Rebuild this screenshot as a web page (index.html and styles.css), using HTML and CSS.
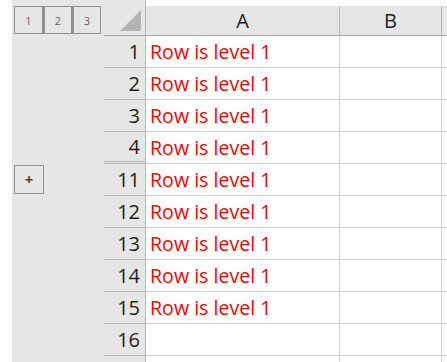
FILE: index.html
```html
<!DOCTYPE html>
<html lang="en">
<head>
  <meta charset="UTF-8">
  <title>Outline</title>
  <link rel="stylesheet" href="styles.css">
</head>
<body>
<div class="sheet">
  <div class="strip"></div>
  <div class="outline">
    <div class="levels">
      <button class="lvl">1</button>
      <button class="lvl">2</button>
      <button class="lvl">3</button>
    </div>
    <div class="expand-row">
      <button class="expand">+</button>
    </div>
  </div>
  <div class="grid">
    <div class="corner">
      <svg width="22" height="22" viewBox="0 0 22 22"><polygon points="21,0 21,21 0,21" fill="#b4b4b4"/></svg>
    </div>
    <div class="colhead">A</div>
    <div class="colhead">B</div>
    <div class="colhead rest"></div>

    <div class="rowhead">1</div><div class="cell">Row is level 1</div><div class="cell"></div><div class="cell rest"></div>
    <div class="rowhead">2</div><div class="cell">Row is level 1</div><div class="cell"></div><div class="cell rest"></div>
    <div class="rowhead">3</div><div class="cell">Row is level 1</div><div class="cell"></div><div class="cell rest"></div>
    <div class="rowhead hidden-after">4</div><div class="cell">Row is level 1</div><div class="cell"></div><div class="cell rest"></div>
    <div class="rowhead">11</div><div class="cell">Row is level 1</div><div class="cell"></div><div class="cell rest"></div>
    <div class="rowhead">12</div><div class="cell">Row is level 1</div><div class="cell"></div><div class="cell rest"></div>
    <div class="rowhead">13</div><div class="cell">Row is level 1</div><div class="cell"></div><div class="cell rest"></div>
    <div class="rowhead">14</div><div class="cell">Row is level 1</div><div class="cell"></div><div class="cell rest"></div>
    <div class="rowhead">15</div><div class="cell">Row is level 1</div><div class="cell"></div><div class="cell rest"></div>
    <div class="rowhead">16</div><div class="cell"></div><div class="cell"></div><div class="cell rest"></div>
    <div class="rowhead last"></div><div class="cell last"></div><div class="cell last"></div><div class="cell rest last"></div>
  </div>
</div>
</body>
</html>
```

FILE: styles.css
```css
body {
  margin: 0;
  font-family: "Open Sans", "Noto Sans", sans-serif;
  background: #ffffff;
}
.sheet {
  display: flex;
  height: 362px;
  overflow: hidden;
}
.strip {
  width: 12px;
  background: #ffffff;
}
.outline {
  width: 92px;
  background: #e6e6e6;
  display: flex;
  flex-direction: column;
}
.levels {
  display: flex;
  margin: 6px 0 0 2px;
}
.lvl, .expand {
  width: 29px;
  height: 28px;
  box-sizing: border-box;
  border: 1px solid #8e9197;
  background: #e6e6e6;
  color: #666666;
  font-family: "Open Sans", sans-serif;
  font-size: 11px;
  padding: 0;
  margin: 0;
}
.lvl + .lvl {
  border-left-width: 2px;
}
.expand-row {
  margin: 131px 0 0 2px;
}
.expand {
  width: 30px;
  height: 29px;
  font-size: 15px;
  font-weight: bold;
  color: #444444;
  line-height: 1;
}
.grid {
  flex: 1;
  display: grid;
  grid-template-columns: 42px 194px 102px 1fr;
  grid-template-rows: 36px repeat(10, 32px) 1fr;
}
.corner {
  background: #e6e6e6;
  border-bottom: 1px solid #a6a6a6;
  border-right: 1px solid #b8b8b8;
  display: flex;
  align-items: flex-end;
  justify-content: flex-end;
  padding: 0 3px 3px 0;
}
.colhead {
  background: #e6e6e6;
  border-bottom: 1px solid #a6a6a6;
  border-right: 1px solid #b8b8b8;
  margin-top: 6px;
  display: flex;
  align-items: center;
  justify-content: center;
  font-size: 20px;
  color: #222222;
}
.colhead.rest {
  border-right: none;
}
.rowhead {
  background: #e6e6e6;
  border-bottom: 1px solid #b8b8b8;
  border-right: 1px solid #b8b8b8;
  display: flex;
  align-items: center;
  justify-content: flex-end;
  padding-right: 5px;
  font-size: 20px;
  color: #222222;
}
.cell {
  border-bottom: 1px solid #d4d4d4;
  border-right: 1px solid #d4d4d4;
  display: flex;
  align-items: center;
  padding-left: 4px;
  font-size: 19.6px;
  color: #ff0000;
  white-space: nowrap;
}
.cell.rest {
  border-right: none;
}
.hidden-after {
  border-bottom: 3px double #b8b8b8;
}
.last {
  border-bottom: none;
}
```
